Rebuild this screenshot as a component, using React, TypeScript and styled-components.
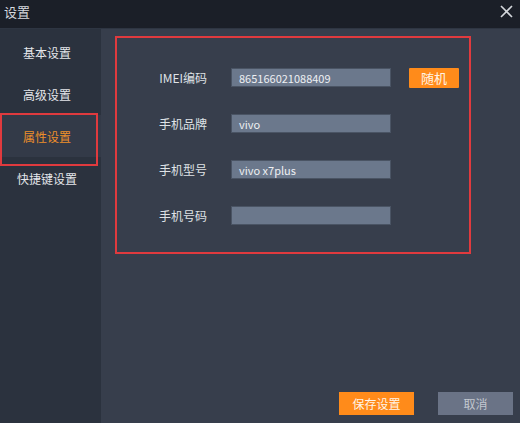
import styled, { createGlobalStyle } from "styled-components";

const GlobalStyle = createGlobalStyle`
    html, body {
        margin: 0;
        padding: 0;
        background: #373e4c;
    }
    * {
        box-sizing: border-box;
    }
`;

const menu = ["基本设置", "高级设置", "属性设置", "快捷键设置"];

const fields = [
    {label: "IMEI编码", value: "865166021088409", random: true},
    {label: "手机品牌", value: "vivo"},
    {label: "手机型号", value: "vivo x7plus"},
    {label: "手机号码", value: ""},
];

const App = () => {
    const active = 2;
    return (
        <Window>
            <GlobalStyle/>
            <TitleBar>
                <Title>设置</Title>
                <CloseButton>
                    <svg width="13" height="13" viewBox="0 0 13 13">
                        <path d="M1 1L12 12M12 1L1 12" stroke="#d4d7dc" strokeWidth="1.6"/>
                    </svg>
                </CloseButton>
            </TitleBar>

            <Body>
                <Sidebar>
                    {menu.map((item, i) => (
                        <MenuItem key={item} isActive={i === active}>
                            {item}
                            {i === active && <MenuMark/>}
                        </MenuItem>
                    ))}
                </Sidebar>

                <Main>
                    <FormBox>
                        {fields.map(f => (
                            <FieldRow key={f.label}>
                                <Label>{f.label}</Label>
                                <Input>{f.value}</Input>
                                {f.random && <RandomButton>随机</RandomButton>}
                            </FieldRow>
                        ))}
                    </FormBox>

                    <Footer>
                        <ActionButton primary>保存设置</ActionButton>
                        <ActionButton>取消</ActionButton>
                    </Footer>
                </Main>
            </Body>
        </Window>
    );
}

export default App;


const font = `"Noto Sans CJK SC", "Noto Sans", sans-serif`;

const Window = styled.div`
    width: 520px;
    height: 423px;
    display: flex;
    flex-direction: column;
    font-family: ${font};
    overflow: hidden;
`;

const TitleBar = styled.div`
    height: 29px;
    flex-shrink: 0;
    display: flex;
    align-items: center;
    justify-content: space-between;
    background-color: #1b1f28;
    border-bottom: 1px solid #2e3542;
`;

const Title = styled.div`
    color: #d6d9de;
    font-size: 13px;
    margin-left: 4px;
    margin-top: -5px;
`;

const CloseButton = styled.div`
    width: 20px;
    display: flex;
    justify-content: flex-start;
    margin-top: -6px;
`;

const Body = styled.div`
    flex: 1;
    display: flex;
`;

const Sidebar = styled.div`
    width: 101px;
    flex-shrink: 0;
    padding-top: 2px;
    background-color: #2b323e;
`;

const MenuItem = styled.div<{
    isActive?: boolean,
}>`
    position: relative;
    height: 42px;
    display: flex;
    align-items: center;
    justify-content: center;
    padding-right: 7px;
    font-size: 12px;
    color: #e4e6ea;

    ${props => props.isActive && `
        color: #ee8f2a;
        background-color: #333a48;
    `}
`;

const MenuMark = styled.div`
    position: absolute;
    left: 0;
    top: -2px;
    width: 98px;
    height: 53px;
    border: 2px solid #e03a3e;
`;

const Main = styled.div`
    flex: 1;
    display: flex;
    flex-direction: column;
    justify-content: space-between;
    padding: 7px 7px 8px 14px;
    background-color: #373e4c;
`;

const FormBox = styled.div`
    width: 356px;
    height: 218px;
    border: 2px solid #e03a3e;
    padding: 30px 0 0 0;
    display: flex;
    flex-direction: column;
    gap: 27px;
`;

const FieldRow = styled.div`
    display: flex;
    align-items: center;
    height: 19px;
`;

const Label = styled.div`
    width: 90px;
    margin-right: 24px;
    text-align: right;
    font-size: 12px;
    color: #dfe2e6;
`;

const Input = styled.div`
    width: 160px;
    height: 19px;
    padding: 0 7px;
    display: flex;
    align-items: center;
    font-size: 11px;
    color: #eef0f3;
    background-color: #6b788c;
    border: 1px solid #4a5464;
`;

const RandomButton = styled.div`
    width: 50px;
    height: 20px;
    margin-left: 18px;
    display: flex;
    align-items: center;
    justify-content: center;
    font-size: 13px;
    color: #fff3e6;
    background-color: #ff8b1a;
    border-radius: 1px;
`;

const Footer = styled.div`
    display: flex;
    justify-content: flex-end;
    gap: 24px;
`;

const ActionButton = styled.div<{
    primary?: boolean,
}>`
    width: 75px;
    height: 23px;
    display: flex;
    align-items: center;
    justify-content: center;
    font-size: 12px;
    color: #c3c8d0;
    background-color: #6a7386;

    ${props => props.primary && `
        color: #fff4e8;
        background-color: #ff8b1a;
    `}
`;
